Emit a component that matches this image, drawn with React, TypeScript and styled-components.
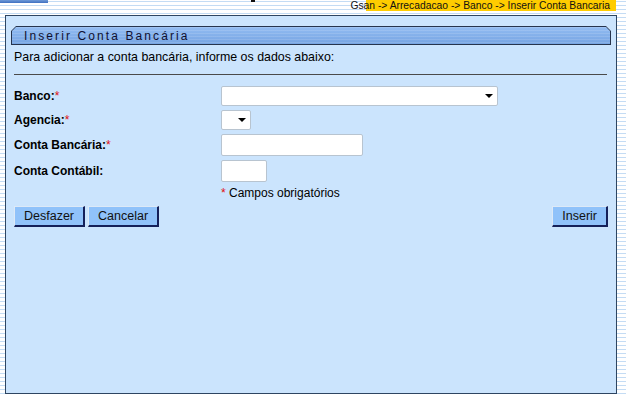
import styled, { createGlobalStyle } from "styled-components";

const GlobalStyle = createGlobalStyle`
  body {
    margin: 0;
    font-family: "Liberation Sans", Arial, sans-serif;
    font-size: 12px;
    color: #000;
    background: repeating-linear-gradient(
      to bottom,
      #ffffff 0px,
      #ffffff 1px,
      #c4dcf4 1px,
      #c4dcf4 2px,
      #ffffff 2px,
      #ffffff 4px
    );
    min-height: 397px;
  }
`;

const Page = styled.div`
  width: 626px;
  height: 397px;
  overflow: hidden;
`;

const Header = styled.div`
  display: flex;
  align-items: flex-start;
  height: 15px;
`;

const LogoBar = styled.div`
  width: 48px;
  height: 3px;
  background: linear-gradient(to bottom, #6e9ad8, #3f6fc0);
`;

const Tick = styled.div`
  width: 4px;
  height: 2px;
  margin-left: 203px;
  background: #111;
`;

const Breadcrumb = styled.div`
  margin-left: auto;
  margin-right: 10px;
  height: 11px;
  line-height: 11px;
  font-size: 10.3px;
  color: #111;
  padding-right: 6px;
  background: linear-gradient(to right, transparent 0, transparent 16px, #ffcc00 16px);
  white-space: nowrap;
`;

const Panel = styled.div`
  margin-left: 5px;
  width: 600px;
  height: 367px;
  border: 1px solid #2e4561;
  background: #cbe4fd;
  padding: 10px 5px 0 5px;
  box-sizing: content-box;
  display: flex;
  flex-direction: column;
`;

const TitleFrame = styled.div`
  height: 19px;
  width: 600px;
  background: #26344d;
  clip-path: polygon(5px 0, calc(100% - 5px) 0, 100% 5px, 100% 100%, 0 100%, 0 5px);
  padding: 1px;
  box-sizing: border-box;
`;

const TitleBar = styled.div`
  height: 100%;
  clip-path: polygon(4px 0, calc(100% - 4px) 0, 100% 4px, 100% 100%, 0 100%, 0 4px);
  background:
    repeating-linear-gradient(
      to bottom,
      rgba(255, 255, 255, 0.12) 0px,
      rgba(255, 255, 255, 0.12) 1px,
      transparent 1px,
      transparent 3px
    ),
    linear-gradient(to bottom, #92bcf2, #76a4e2);
  display: flex;
  align-items: center;
  padding-left: 12px;
  font-size: 12px;
  letter-spacing: 2.1px;
  color: #101030;
`;

const Body = styled.div`
  padding: 5px 3px 0 3px;
`;

const Intro = styled.div`
  line-height: 14px;
  font-size: 12.4px;
`;

const Rule = styled.div`
  height: 1px;
  background: #4a4a4a;
  margin: 10px 1px 11px 0;
`;

const Form = styled.div`
  display: grid;
  grid-template-columns: 207px 1fr;
  row-gap: 4px;
  align-items: center;
`;

const Label = styled.label`
  font-weight: bold;
  font-size: 12px;
`;

const Req = styled.span`
  color: #e01010;
  font-weight: normal;
`;

const SelectWrap = styled.div<{ $w: number }>`
  position: relative;
  width: ${(p) => p.$w}px;
  height: 20px;
  &::after {
    content: "";
    position: absolute;
    right: 5px;
    top: 8px;
    border-left: 4px solid transparent;
    border-right: 4px solid transparent;
    border-top: 4px solid #000;
  }
`;

const Select = styled.select`
  appearance: none;
  width: 100%;
  height: 100%;
  background: #fff;
  border: 1px solid #b8c4d0;
  border-radius: 2px;
  margin: 0;
  display: block;
`;

const Input = styled.input<{ $w: number }>`
  width: ${(p) => p.$w}px;
  height: 22px;
  box-sizing: border-box;
  border: 1px solid #b8c4d0;
  border-radius: 2px;
  background: #fff;
  margin: 0;
  display: block;
`;

const Note = styled.div`
  grid-column: 2;
  line-height: 14px;
`;

const Actions = styled.div`
  display: flex;
  gap: 3px;
  margin-top: 6px;
`;

const Button = styled.button`
  height: 21px;
  padding: 0 9px;
  font-family: "Liberation Sans", Arial, sans-serif;
  font-size: 12.5px;
  color: #111;
  background: #90c2fa;
  border-style: solid;
  border-width: 1px 2px 2px 1px;
  border-color: #dde9f7 #14205a #14205a #dde9f7;
  &:last-child {
    margin-left: auto;
  }
`;

export default function App() {
  return (
    <Page>
      <GlobalStyle />
      <Header>
        <LogoBar />
        <Tick />
        <Breadcrumb>Gsan -&gt; Arrecadacao -&gt; Banco -&gt; Inserir Conta Bancaria</Breadcrumb>
      </Header>
      <Panel>
        <TitleFrame>
          <TitleBar>Inserir Conta Bancária</TitleBar>
        </TitleFrame>
        <Body>
          <Intro>Para adicionar a conta bancária, informe os dados abaixo:</Intro>
          <Rule />
          <Form>
            <Label>
              Banco:<Req>*</Req>
            </Label>
            <SelectWrap $w={277}>
              <Select />
            </SelectWrap>
            <Label>
              Agencia:<Req>*</Req>
            </Label>
            <SelectWrap $w={30}>
              <Select />
            </SelectWrap>
            <Label>
              Conta Bancária:<Req>*</Req>
            </Label>
            <Input $w={142} />
            <Label>Conta Contábil:</Label>
            <Input $w={46} />
            <Note>
              <Req>*</Req> Campos obrigatórios
            </Note>
          </Form>
          <Actions>
            <Button>Desfazer</Button>
            <Button>Cancelar</Button>
            <Button>Inserir</Button>
          </Actions>
        </Body>
      </Panel>
    </Page>
  );
}
